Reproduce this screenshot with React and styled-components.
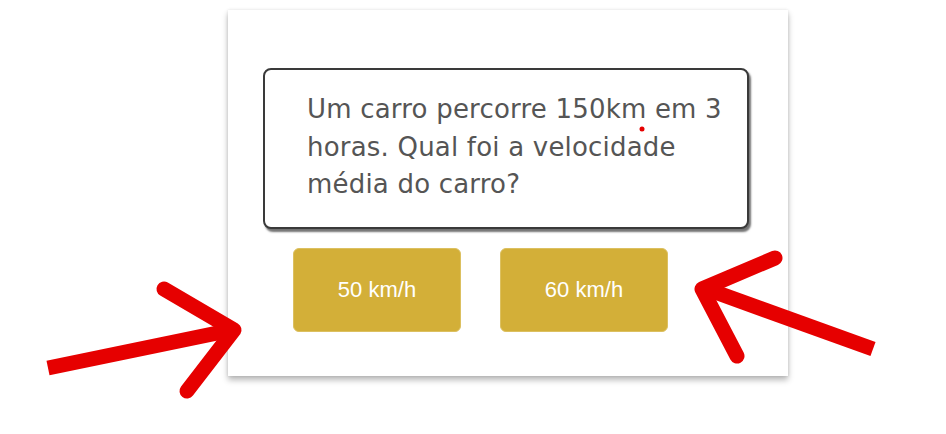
import React from 'react';
import styled, { createGlobalStyle } from 'styled-components';

const GlobalStyle = createGlobalStyle`
  html, body {
    margin: 0;
    padding: 0;
    background: #ffffff;
  }
  body {
    font-family: "Liberation Sans", Arial, sans-serif;
  }
`;

const Page = styled.div`
  position: relative;
  width: 946px;
  height: 434px;
  overflow: hidden;
  background: #ffffff;
  padding-top: 10px;
  box-sizing: border-box;
`;

const Card = styled.div`
  width: 560px;
  height: 366px;
  margin-left: 228px;
  padding: 58px 0 0 35px;
  box-sizing: border-box;
  background: #ffffff;
  box-shadow: 0 4px 6px rgba(0, 0, 0, 0.28), 0 0 3px rgba(0, 0, 0, 0.1);
`;

const QuestionBox = styled.div`
  width: 486px;
  height: 161px;
  box-sizing: border-box;
  border: 2px solid #3a3a3a;
  border-radius: 8px;
  padding: 21px 14px 0 42px;
  box-shadow: 2px 3px 2px rgba(0, 0, 0, 0.55);
  background: #ffffff;
`;

const QuestionText = styled.p`
  margin: 0;
  font-family: "DejaVu Sans", Verdana, sans-serif;
  font-size: 26px;
  letter-spacing: 0.2px;
  line-height: 37.5px;
  color: #555555;
`;

const Options = styled.div`
  display: flex;
  gap: 39px;
  margin-top: 19px;
  padding-left: 30px;
`;

const Option = styled.button`
  width: 168px;
  height: 84px;
  border: 1px solid #dcc060;
  border-radius: 6px;
  background: #d3af38;
  color: #ffffff;
  font-family: "Liberation Sans", Arial, sans-serif;
  font-size: 22px;
  padding: 0;
  cursor: pointer;
`;

const Overlay = styled.svg`
  position: absolute;
  left: 0;
  top: 0;
  pointer-events: none;
`;

const arrowRed = '#e60000';

const App = () => (
  <>
    <GlobalStyle />
    <Page>
      <Card>
        <QuestionBox>
          <QuestionText>
            Um carro percorre 150km em 3 horas. Qual foi a velocidade média do carro?
          </QuestionText>
        </QuestionBox>
        <Options>
          <Option>50 km/h</Option>
          <Option>60 km/h</Option>
        </Options>
      </Card>
      <Overlay width="946" height="434" viewBox="0 0 946 434">
        <g stroke={arrowRed} strokeWidth="15" fill="none" strokeLinejoin="round">
          <line x1="48" y1="368" x2="232" y2="330" strokeLinecap="butt" />
          <polyline points="164,289 234,330 187,391" strokeLinecap="round" />
          <line x1="873" y1="349" x2="704" y2="288" strokeLinecap="butt" />
          <polyline points="775,258 702,289 737,356" strokeLinecap="round" />
        </g>
        <circle cx="642" cy="129" r="2.5" fill={arrowRed} />
      </Overlay>
    </Page>
  </>
);

export default App;
